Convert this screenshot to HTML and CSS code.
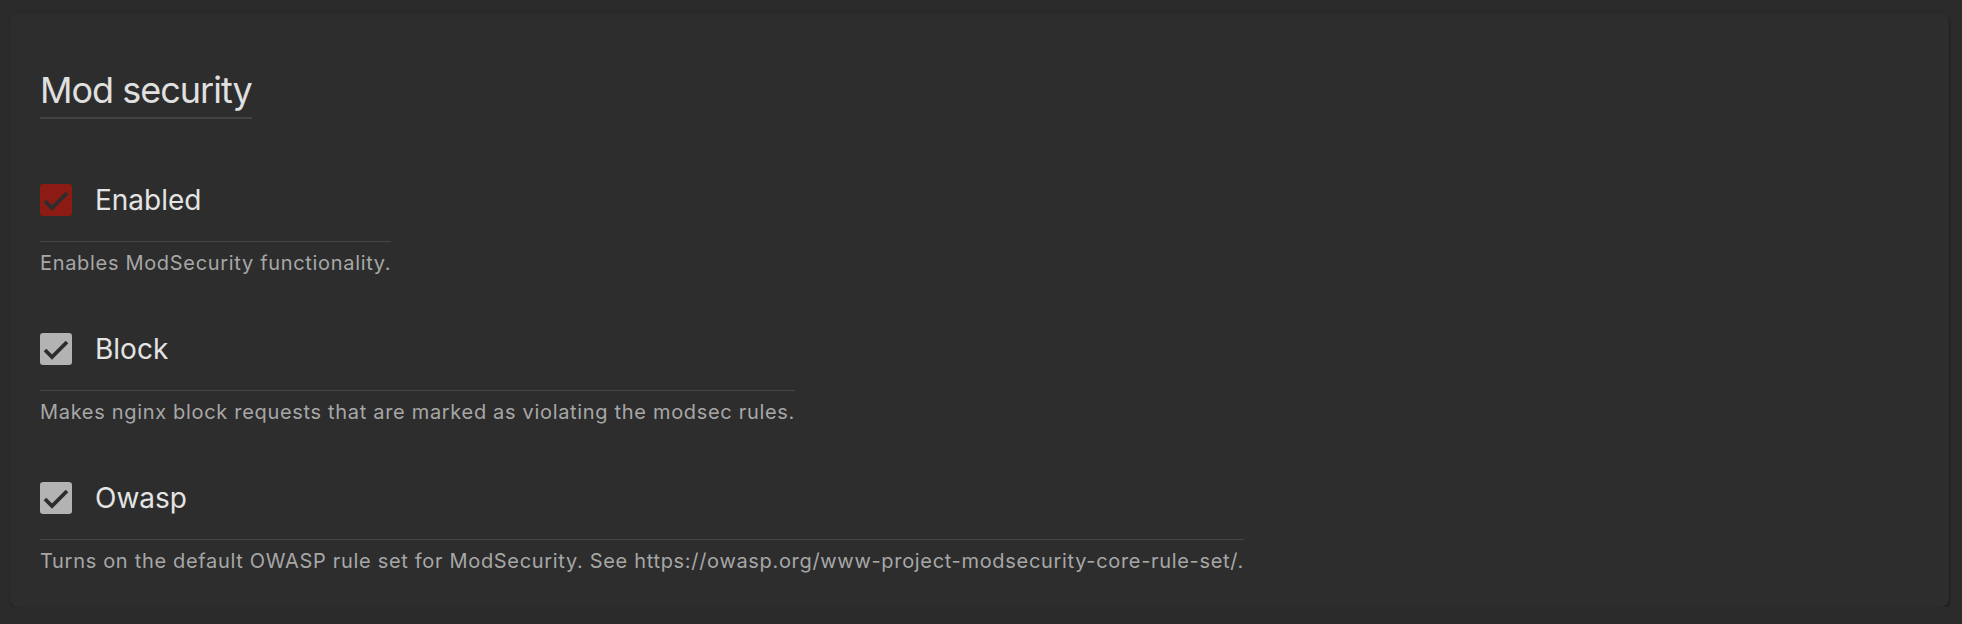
FILE: index.html
```html
<!DOCTYPE html>
<html lang="en">
<head>
<meta charset="utf-8">
<title>Mod security</title>
<link rel="stylesheet" href="styles.css">
</head>
<body>
<div class="page">
  <section class="card">
    <h2 class="title">Mod security</h2>
    <div class="fields">
      <div class="field">
        <label class="field-row">
          <span class="box box-red"><svg viewBox="0 0 32 32" width="32" height="32"><path d="M5 17 L12 24 L27 9" fill="none" stroke="#2d2d2d" stroke-width="3.8"/></svg></span>
          <span class="label">Enabled</span>
        </label>
        <p class="desc">Enables ModSecurity functionality.</p>
      </div>
      <div class="field">
        <label class="field-row">
          <span class="box box-grey"><svg viewBox="0 0 32 32" width="32" height="32"><path d="M5 17 L12 24 L27 9" fill="none" stroke="#2d2d2d" stroke-width="3.8"/></svg></span>
          <span class="label">Block</span>
        </label>
        <p class="desc">Makes nginx block requests that are marked as violating the modsec rules.</p>
      </div>
      <div class="field">
        <label class="field-row">
          <span class="box box-grey"><svg viewBox="0 0 32 32" width="32" height="32"><path d="M5 17 L12 24 L27 9" fill="none" stroke="#2d2d2d" stroke-width="3.8"/></svg></span>
          <span class="label">Owasp</span>
        </label>
        <p class="desc">Turns on the default OWASP rule set for ModSecurity. See https://owasp.org/www-project-modsecurity-core-rule-set/.</p>
      </div>
    </div>
  </section>
</div>
</body>
</html>
```
FILE: styles.css
```css
html, body {
  margin: 0;
  padding: 0;
  background: #2a2a2a;
  font-family: Inter, "Noto Sans", "Liberation Sans", sans-serif;
}
.page {
  padding: 14px 13px 0 10px;
}
.card {
  background: #2d2d2d;
  border-radius: 8px;
  box-shadow: 1px 2px 2px rgba(0, 0, 0, 0.3);
  padding: 54px 30px 32px 30px;
}
.title {
  display: inline-block;
  margin: 0;
  font-size: 36px;
  line-height: 44px;
  font-weight: 400;
  letter-spacing: -1px;
  color: #e0e0e0;
  padding-bottom: 5px;
  border-bottom: 2px solid #434343;
}
.fields {
  display: flex;
  flex-direction: column;
  align-items: flex-start;
  gap: 56px;
  margin-top: 65px;
}
.field {
  display: flex;
  flex-direction: column;
}
.field-row {
  display: flex;
  align-items: center;
  gap: 23px;
  padding-bottom: 25px;
  border-bottom: 1px solid #464646;
}
.box {
  width: 32px;
  height: 32px;
  border-radius: 3px;
  display: block;
}
.box svg { display: block; }
.box-red { background: #8c1a15; }
.box-grey { background: #b3b3b3; }
.label {
  font-size: 28px;
  line-height: 32px;
  color: #e4e4e4;
}
.desc {
  margin: 7px 0 0 0;
  font-size: 20px;
  line-height: 28px;
  letter-spacing: 0.68px;
  color: #a7a7a7;
  white-space: nowrap;
}
```
